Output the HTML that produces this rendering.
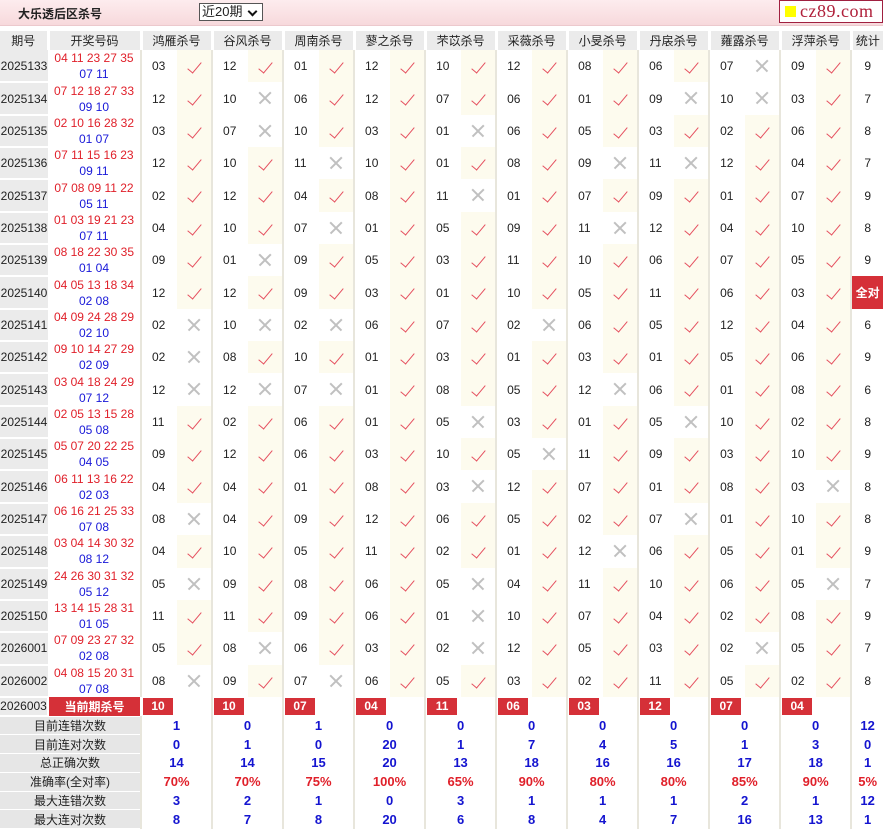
<!DOCTYPE html>
<html><head><meta charset="utf-8">
<style>
*{box-sizing:border-box}
body{margin:0;width:883px;height:829px;overflow:hidden;background:#fff;font-family:"Liberation Sans","Noto Sans CJK SC",sans-serif;font-size:12px;color:#222}
.top{position:relative;height:26px;background:linear-gradient(#fdecee,#f7d9dc);border-bottom:1px solid #ecc9cd}
.top .t{position:absolute;left:18px;top:5px;font-size:12px;font-weight:bold;color:#222}
.top .sel{position:absolute;left:199px;top:3px;width:64px;height:18px;border:1px solid #555;background:#fff;font-size:13px;line-height:16px;padding-left:2px}
.top .sel:after{content:"";position:absolute;right:6px;top:4px;width:5px;height:5px;border:solid #111;border-width:0 2px 2px 0;transform:rotate(45deg)}
.logo{position:absolute;left:779px;top:0;width:104px;height:23px;border:1px solid #a02040;background:#fff}
.logo i{position:absolute;left:5px;top:5px;width:11px;height:11px;background:#ff0}
.logo span{position:absolute;left:20px;top:0;font-family:"Liberation Serif",serif;font-size:18px;color:#b0203a;letter-spacing:.5px}
table{position:absolute;left:0;top:31px;width:883px;border-collapse:collapse;table-layout:fixed}
td{padding:0;white-space:nowrap;overflow:hidden}
tr.h td{height:19px;background:#ebebeb;text-align:center;border-left:3px solid #fff;font-size:12px}
tr.h td:first-child{border-left:0}
tr.d td{height:32.35px}
td.p{background:#ebebeb;border-bottom:2px solid #fff;text-align:center;font-size:12px}
td.n{text-align:center;line-height:16px;font-size:12px}
td.n b{display:block;font-weight:normal;color:#e0202a}
td.n i{display:block;font-style:normal;color:#1818d8}
td.v{border-left:2px solid #e8e6dc;padding-left:10px}
td.k{background:#fdfbee;position:relative}
td.k:after{content:"";position:absolute;left:14px;top:9px;width:6px;height:13px;border:solid #e5505f;border-width:0 1.6px 1.6px 0;transform:rotate(40deg)}
td.x{position:relative}
td.x:before,td.x:after{content:"";position:absolute;left:9px;top:15px;width:16px;height:1.5px;background:#c0c0c0;transform:rotate(45deg)}
td.x:after{transform:rotate(-45deg)}
td.s{border-left:2px solid #e8e6dc;text-align:center}
td.all{background:#d53038;color:#fff;font-weight:bold;text-align:center;border-left:2px solid #e8e6dc}
tr.c td{height:19px}
td.cur{background:#d53038;color:#fff;font-weight:bold;text-align:center;border-left:2px solid #fff;border-right:2px solid #fff}
td.cb{border-left:2px solid #e8e6dc;padding-left:0}
td.cb span{display:inline-block;width:30px;height:17px;margin-left:1px;background:#d53038;color:#fff;font-weight:bold;text-align:center;line-height:17px}
tr.st td{height:18.8px;text-align:center;font-weight:bold;color:#1414d0;font-size:13px;border-left:2px solid #e8e6dc}
tr.st td.l{background:#e6e6e6;color:#222;font-weight:normal;font-size:12px;border-left:0;border-bottom:1px solid #fff}
tr.st.r td{color:#e0202a}
tr.st.r td.l{color:#222}
</style></head><body>
<div class="top"><div class="t">大乐透后区杀号</div><div class="sel">近20期</div><div class="logo"><i></i><span>cz89.com</span></div></div>
<table>
<colgroup><col style="width:48px"><col style="width:93px">
<col style="width:36px"><col style="width:35px"><col style="width:36px"><col style="width:35px"><col style="width:36px"><col style="width:35px"><col style="width:36px"><col style="width:35px"><col style="width:36px"><col style="width:35px"><col style="width:36px"><col style="width:35px"><col style="width:36px"><col style="width:35px"><col style="width:36px"><col style="width:35px"><col style="width:36px"><col style="width:35px"><col style="width:36px"><col style="width:35px">
<col style="width:32px"></colgroup>
<tr class="h"><td>期号</td><td>开奖号码</td><td colspan="2">鸿雁杀号</td><td colspan="2">谷风杀号</td><td colspan="2">周南杀号</td><td colspan="2">蓼之杀号</td><td colspan="2">芣苡杀号</td><td colspan="2">采薇杀号</td><td colspan="2">小旻杀号</td><td colspan="2">丹扆杀号</td><td colspan="2">蕹露杀号</td><td colspan="2">浮萍杀号</td><td>统计</td></tr>
<tr class="d"><td class="p">2025133</td><td class="n"><b>04 11 23 27 35</b><i>07 11</i></td><td class="v">03</td><td class="k"></td><td class="v">12</td><td class="k"></td><td class="v">01</td><td class="k"></td><td class="v">12</td><td class="k"></td><td class="v">10</td><td class="k"></td><td class="v">12</td><td class="k"></td><td class="v">08</td><td class="k"></td><td class="v">06</td><td class="k"></td><td class="v">07</td><td class="x"></td><td class="v">09</td><td class="k"></td><td class="s">9</td></tr>
<tr class="d"><td class="p">2025134</td><td class="n"><b>07 12 18 27 33</b><i>09 10</i></td><td class="v">12</td><td class="k"></td><td class="v">10</td><td class="x"></td><td class="v">06</td><td class="k"></td><td class="v">12</td><td class="k"></td><td class="v">07</td><td class="k"></td><td class="v">06</td><td class="k"></td><td class="v">01</td><td class="k"></td><td class="v">09</td><td class="x"></td><td class="v">10</td><td class="x"></td><td class="v">03</td><td class="k"></td><td class="s">7</td></tr>
<tr class="d"><td class="p">2025135</td><td class="n"><b>02 10 16 28 32</b><i>01 07</i></td><td class="v">03</td><td class="k"></td><td class="v">07</td><td class="x"></td><td class="v">10</td><td class="k"></td><td class="v">03</td><td class="k"></td><td class="v">01</td><td class="x"></td><td class="v">06</td><td class="k"></td><td class="v">05</td><td class="k"></td><td class="v">03</td><td class="k"></td><td class="v">02</td><td class="k"></td><td class="v">06</td><td class="k"></td><td class="s">8</td></tr>
<tr class="d"><td class="p">2025136</td><td class="n"><b>07 11 15 16 23</b><i>09 11</i></td><td class="v">12</td><td class="k"></td><td class="v">10</td><td class="k"></td><td class="v">11</td><td class="x"></td><td class="v">10</td><td class="k"></td><td class="v">01</td><td class="k"></td><td class="v">08</td><td class="k"></td><td class="v">09</td><td class="x"></td><td class="v">11</td><td class="x"></td><td class="v">12</td><td class="k"></td><td class="v">04</td><td class="k"></td><td class="s">7</td></tr>
<tr class="d"><td class="p">2025137</td><td class="n"><b>07 08 09 11 22</b><i>05 11</i></td><td class="v">02</td><td class="k"></td><td class="v">12</td><td class="k"></td><td class="v">04</td><td class="k"></td><td class="v">08</td><td class="k"></td><td class="v">11</td><td class="x"></td><td class="v">01</td><td class="k"></td><td class="v">07</td><td class="k"></td><td class="v">09</td><td class="k"></td><td class="v">01</td><td class="k"></td><td class="v">07</td><td class="k"></td><td class="s">9</td></tr>
<tr class="d"><td class="p">2025138</td><td class="n"><b>01 03 19 21 23</b><i>07 11</i></td><td class="v">04</td><td class="k"></td><td class="v">10</td><td class="k"></td><td class="v">07</td><td class="x"></td><td class="v">01</td><td class="k"></td><td class="v">05</td><td class="k"></td><td class="v">09</td><td class="k"></td><td class="v">11</td><td class="x"></td><td class="v">12</td><td class="k"></td><td class="v">04</td><td class="k"></td><td class="v">10</td><td class="k"></td><td class="s">8</td></tr>
<tr class="d"><td class="p">2025139</td><td class="n"><b>08 18 22 30 35</b><i>01 04</i></td><td class="v">09</td><td class="k"></td><td class="v">01</td><td class="x"></td><td class="v">09</td><td class="k"></td><td class="v">05</td><td class="k"></td><td class="v">03</td><td class="k"></td><td class="v">11</td><td class="k"></td><td class="v">10</td><td class="k"></td><td class="v">06</td><td class="k"></td><td class="v">07</td><td class="k"></td><td class="v">05</td><td class="k"></td><td class="s">9</td></tr>
<tr class="d"><td class="p">2025140</td><td class="n"><b>04 05 13 18 34</b><i>02 08</i></td><td class="v">12</td><td class="k"></td><td class="v">12</td><td class="k"></td><td class="v">09</td><td class="k"></td><td class="v">03</td><td class="k"></td><td class="v">01</td><td class="k"></td><td class="v">10</td><td class="k"></td><td class="v">05</td><td class="k"></td><td class="v">11</td><td class="k"></td><td class="v">06</td><td class="k"></td><td class="v">03</td><td class="k"></td><td class="all">全对</td></tr>
<tr class="d"><td class="p">2025141</td><td class="n"><b>04 09 24 28 29</b><i>02 10</i></td><td class="v">02</td><td class="x"></td><td class="v">10</td><td class="x"></td><td class="v">02</td><td class="x"></td><td class="v">06</td><td class="k"></td><td class="v">07</td><td class="k"></td><td class="v">02</td><td class="x"></td><td class="v">06</td><td class="k"></td><td class="v">05</td><td class="k"></td><td class="v">12</td><td class="k"></td><td class="v">04</td><td class="k"></td><td class="s">6</td></tr>
<tr class="d"><td class="p">2025142</td><td class="n"><b>09 10 14 27 29</b><i>02 09</i></td><td class="v">02</td><td class="x"></td><td class="v">08</td><td class="k"></td><td class="v">10</td><td class="k"></td><td class="v">01</td><td class="k"></td><td class="v">03</td><td class="k"></td><td class="v">01</td><td class="k"></td><td class="v">03</td><td class="k"></td><td class="v">01</td><td class="k"></td><td class="v">05</td><td class="k"></td><td class="v">06</td><td class="k"></td><td class="s">9</td></tr>
<tr class="d"><td class="p">2025143</td><td class="n"><b>03 04 18 24 29</b><i>07 12</i></td><td class="v">12</td><td class="x"></td><td class="v">12</td><td class="x"></td><td class="v">07</td><td class="x"></td><td class="v">01</td><td class="k"></td><td class="v">08</td><td class="k"></td><td class="v">05</td><td class="k"></td><td class="v">12</td><td class="x"></td><td class="v">06</td><td class="k"></td><td class="v">01</td><td class="k"></td><td class="v">08</td><td class="k"></td><td class="s">6</td></tr>
<tr class="d"><td class="p">2025144</td><td class="n"><b>02 05 13 15 28</b><i>05 08</i></td><td class="v">11</td><td class="k"></td><td class="v">02</td><td class="k"></td><td class="v">06</td><td class="k"></td><td class="v">01</td><td class="k"></td><td class="v">05</td><td class="x"></td><td class="v">03</td><td class="k"></td><td class="v">01</td><td class="k"></td><td class="v">05</td><td class="x"></td><td class="v">10</td><td class="k"></td><td class="v">02</td><td class="k"></td><td class="s">8</td></tr>
<tr class="d"><td class="p">2025145</td><td class="n"><b>05 07 20 22 25</b><i>04 05</i></td><td class="v">09</td><td class="k"></td><td class="v">12</td><td class="k"></td><td class="v">06</td><td class="k"></td><td class="v">03</td><td class="k"></td><td class="v">10</td><td class="k"></td><td class="v">05</td><td class="x"></td><td class="v">11</td><td class="k"></td><td class="v">09</td><td class="k"></td><td class="v">03</td><td class="k"></td><td class="v">10</td><td class="k"></td><td class="s">9</td></tr>
<tr class="d"><td class="p">2025146</td><td class="n"><b>06 11 13 16 22</b><i>02 03</i></td><td class="v">04</td><td class="k"></td><td class="v">04</td><td class="k"></td><td class="v">01</td><td class="k"></td><td class="v">08</td><td class="k"></td><td class="v">03</td><td class="x"></td><td class="v">12</td><td class="k"></td><td class="v">07</td><td class="k"></td><td class="v">01</td><td class="k"></td><td class="v">08</td><td class="k"></td><td class="v">03</td><td class="x"></td><td class="s">8</td></tr>
<tr class="d"><td class="p">2025147</td><td class="n"><b>06 16 21 25 33</b><i>07 08</i></td><td class="v">08</td><td class="x"></td><td class="v">04</td><td class="k"></td><td class="v">09</td><td class="k"></td><td class="v">12</td><td class="k"></td><td class="v">06</td><td class="k"></td><td class="v">05</td><td class="k"></td><td class="v">02</td><td class="k"></td><td class="v">07</td><td class="x"></td><td class="v">01</td><td class="k"></td><td class="v">10</td><td class="k"></td><td class="s">8</td></tr>
<tr class="d"><td class="p">2025148</td><td class="n"><b>03 04 14 30 32</b><i>08 12</i></td><td class="v">04</td><td class="k"></td><td class="v">10</td><td class="k"></td><td class="v">05</td><td class="k"></td><td class="v">11</td><td class="k"></td><td class="v">02</td><td class="k"></td><td class="v">01</td><td class="k"></td><td class="v">12</td><td class="x"></td><td class="v">06</td><td class="k"></td><td class="v">05</td><td class="k"></td><td class="v">01</td><td class="k"></td><td class="s">9</td></tr>
<tr class="d"><td class="p">2025149</td><td class="n"><b>24 26 30 31 32</b><i>05 12</i></td><td class="v">05</td><td class="x"></td><td class="v">09</td><td class="k"></td><td class="v">08</td><td class="k"></td><td class="v">06</td><td class="k"></td><td class="v">05</td><td class="x"></td><td class="v">04</td><td class="k"></td><td class="v">11</td><td class="k"></td><td class="v">10</td><td class="k"></td><td class="v">06</td><td class="k"></td><td class="v">05</td><td class="x"></td><td class="s">7</td></tr>
<tr class="d"><td class="p">2025150</td><td class="n"><b>13 14 15 28 31</b><i>01 05</i></td><td class="v">11</td><td class="k"></td><td class="v">11</td><td class="k"></td><td class="v">09</td><td class="k"></td><td class="v">06</td><td class="k"></td><td class="v">01</td><td class="x"></td><td class="v">10</td><td class="k"></td><td class="v">07</td><td class="k"></td><td class="v">04</td><td class="k"></td><td class="v">02</td><td class="k"></td><td class="v">08</td><td class="k"></td><td class="s">9</td></tr>
<tr class="d"><td class="p">2026001</td><td class="n"><b>07 09 23 27 32</b><i>02 08</i></td><td class="v">05</td><td class="k"></td><td class="v">08</td><td class="x"></td><td class="v">06</td><td class="k"></td><td class="v">03</td><td class="k"></td><td class="v">02</td><td class="x"></td><td class="v">12</td><td class="k"></td><td class="v">05</td><td class="k"></td><td class="v">03</td><td class="k"></td><td class="v">02</td><td class="x"></td><td class="v">05</td><td class="k"></td><td class="s">7</td></tr>
<tr class="d"><td class="p">2026002</td><td class="n"><b>04 08 15 20 31</b><i>07 08</i></td><td class="v">08</td><td class="x"></td><td class="v">09</td><td class="k"></td><td class="v">07</td><td class="x"></td><td class="v">06</td><td class="k"></td><td class="v">05</td><td class="k"></td><td class="v">03</td><td class="k"></td><td class="v">02</td><td class="k"></td><td class="v">11</td><td class="k"></td><td class="v">05</td><td class="k"></td><td class="v">02</td><td class="k"></td><td class="s">8</td></tr>
<tr class="c"><td class="p">2026003</td><td class="cur">当前期杀号</td><td colspan="2" class="cb"><span>10</span></td><td colspan="2" class="cb"><span>10</span></td><td colspan="2" class="cb"><span>07</span></td><td colspan="2" class="cb"><span>04</span></td><td colspan="2" class="cb"><span>11</span></td><td colspan="2" class="cb"><span>06</span></td><td colspan="2" class="cb"><span>03</span></td><td colspan="2" class="cb"><span>12</span></td><td colspan="2" class="cb"><span>07</span></td><td colspan="2" class="cb"><span>04</span></td><td class="s"></td></tr>
<tr class="st"><td colspan="2" class="l">目前连错次数</td><td colspan="2">1</td><td colspan="2">0</td><td colspan="2">1</td><td colspan="2">0</td><td colspan="2">0</td><td colspan="2">0</td><td colspan="2">0</td><td colspan="2">0</td><td colspan="2">0</td><td colspan="2">0</td><td>12</td></tr>
<tr class="st"><td colspan="2" class="l">目前连对次数</td><td colspan="2">0</td><td colspan="2">1</td><td colspan="2">0</td><td colspan="2">20</td><td colspan="2">1</td><td colspan="2">7</td><td colspan="2">4</td><td colspan="2">5</td><td colspan="2">1</td><td colspan="2">3</td><td>0</td></tr>
<tr class="st"><td colspan="2" class="l">总正确次数</td><td colspan="2">14</td><td colspan="2">14</td><td colspan="2">15</td><td colspan="2">20</td><td colspan="2">13</td><td colspan="2">18</td><td colspan="2">16</td><td colspan="2">16</td><td colspan="2">17</td><td colspan="2">18</td><td>1</td></tr>
<tr class="st r"><td colspan="2" class="l">准确率(全对率)</td><td colspan="2">70%</td><td colspan="2">70%</td><td colspan="2">75%</td><td colspan="2">100%</td><td colspan="2">65%</td><td colspan="2">90%</td><td colspan="2">80%</td><td colspan="2">80%</td><td colspan="2">85%</td><td colspan="2">90%</td><td>5%</td></tr>
<tr class="st"><td colspan="2" class="l">最大连错次数</td><td colspan="2">3</td><td colspan="2">2</td><td colspan="2">1</td><td colspan="2">0</td><td colspan="2">3</td><td colspan="2">1</td><td colspan="2">1</td><td colspan="2">1</td><td colspan="2">2</td><td colspan="2">1</td><td>12</td></tr>
<tr class="st"><td colspan="2" class="l">最大连对次数</td><td colspan="2">8</td><td colspan="2">7</td><td colspan="2">8</td><td colspan="2">20</td><td colspan="2">6</td><td colspan="2">8</td><td colspan="2">4</td><td colspan="2">7</td><td colspan="2">16</td><td colspan="2">13</td><td>1</td></tr>
</table>
</body></html>
